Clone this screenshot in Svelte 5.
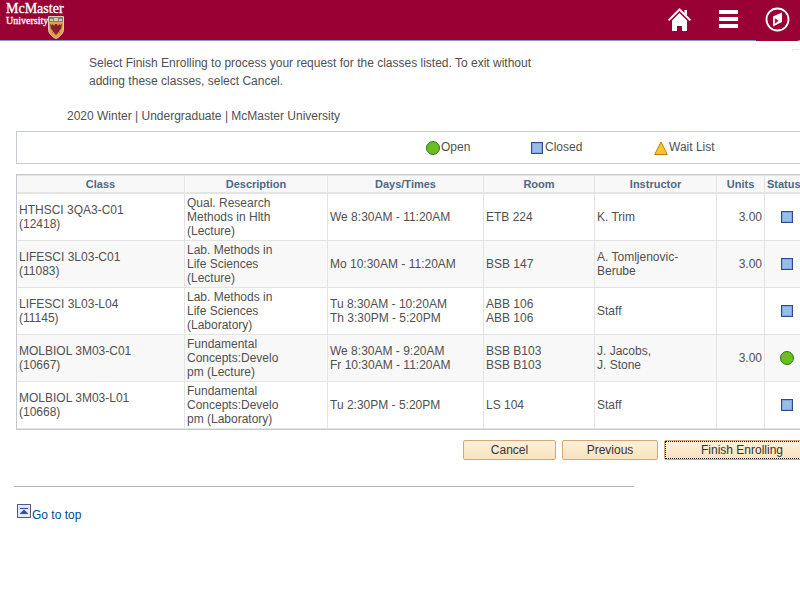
<script>
  const columns = [
    { label: 'Class', width: 168 },
    { label: 'Description', width: 143 },
    { label: 'Days/Times', width: 156 },
    { label: 'Room', width: 111 },
    { label: 'Instructor', width: 122 },
    { label: 'Units', width: 48 },
    { label: 'Status', width: 45 }
  ];

  const rows = [
    {
      name: ['HTHSCI 3QA3-C01', '(12418)'],
      description: ['Qual. Research', 'Methods in Hlth', '(Lecture)'],
      times: ['We 8:30AM - 11:20AM'],
      room: ['ETB 224'],
      instructor: ['K. Trim'],
      units: '3.00',
      status: 'closed'
    },
    {
      name: ['LIFESCI 3L03-C01', '(11083)'],
      description: ['Lab. Methods in', 'Life Sciences', '(Lecture)'],
      times: ['Mo 10:30AM - 11:20AM'],
      room: ['BSB 147'],
      instructor: ['A. Tomljenovic-', 'Berube'],
      units: '3.00',
      status: 'closed'
    },
    {
      name: ['LIFESCI 3L03-L04', '(11145)'],
      description: ['Lab. Methods in', 'Life Sciences', '(Laboratory)'],
      times: ['Tu 8:30AM - 10:20AM', 'Th 3:30PM - 5:20PM'],
      room: ['ABB 106', 'ABB 106'],
      instructor: ['Staff'],
      units: '',
      status: 'closed'
    },
    {
      name: ['MOLBIOL 3M03-C01', '(10667)'],
      description: ['Fundamental', 'Concepts:Develo', 'pm (Lecture)'],
      times: ['We 8:30AM - 9:20AM', 'Fr 10:30AM - 11:20AM'],
      room: ['BSB B103', 'BSB B103'],
      instructor: ['J. Jacobs,', 'J. Stone'],
      units: '3.00',
      status: 'open'
    },
    {
      name: ['MOLBIOL 3M03-L01', '(10668)'],
      description: ['Fundamental', 'Concepts:Develo', 'pm (Laboratory)'],
      times: ['Tu 2:30PM - 5:20PM'],
      room: ['LS 104'],
      instructor: ['Staff'],
      units: '',
      status: 'closed'
    }
  ];
</script>

{#snippet statusIcon(kind)}
  <svg class="status" width="14" height="14" viewBox="0 0 14 14" aria-hidden="true">
    {#if kind === 'open'}
      <circle cx="7" cy="7" r="6.5" fill="#6cbd1d" stroke="#188312" />
    {:else if kind === 'closed'}
      <rect x="1.5" y="1.5" width="11" height="11" fill="#97beeb" stroke="#2e4a8e" />
      <rect x="2.5" y="2.5" width="9" height="9" fill="none" stroke="#81a9df" />
    {:else}
      <path d="M7 .9 13.3 13.5H.7Z" fill="#fdc62f" stroke="#c0790a" />
    {/if}
  </svg>
{/snippet}

{#snippet lines(list)}
  {#each list as line}<div>{line}</div>{/each}
{/snippet}

<div class="page" id="top">
  <header>
    <a class="brand" href="#top">
      <span class="brand-name">McMaster</span>
      <span class="brand-row">
        <span class="brand-sub">University</span>
        <svg width="16" height="23" viewBox="0 0 16 23" aria-hidden="true">
          <path d="M.5 .5h15V13c0 4-3 7.500-7.500 9.500C3.500 20.500.5 17 .5 13Z" fill="#dfa348" stroke="#d9cfbe" />
          <path d="M1 1h14v5H1Z" fill="#85787c" />
          <path d="M2 3h3v2H2Zm4-1h4v3H6Zm5 1h3v2h-3Z" fill="#d8c8a0" />
          <path d="M2 8l2 1 1-1 1 2 1-2h2l1 2 1-2 1 1 2-1-1 5-2 2 1 2-2-1-1 3-1-1-1 1-1-3-2 1 1-2-2-2Z" fill="#86202b" />
        </svg>
      </span>
    </a>
    <nav>
      <a href="#home" aria-label="Home">
        <svg width="26" height="26" viewBox="0 0 26 26">
          <path d="M2.600 14.400 13.500 3.500 24.400 14.400" fill="none" stroke="#fff" stroke-width="2" />
          <path d="M18.500 4H21v6l-2.500-2.500Z" fill="#fff" />
          <path d="m13.500 7 7.500 7.500V25h-5v-5h-5v5H6V14.500Z" fill="#fff" />
        </svg>
      </a>
      <a href="#menu" aria-label="Menu">
        <svg width="26" height="26" viewBox="0 0 26 26">
          <path d="M4 4h19v4H4Zm0 7h19v4H4Zm0 7h19v4H4Z" fill="#fff" />
        </svg>
      </a>
      <a class="compass" href="#navbar" aria-label="NavBar">
        <svg width="26" height="26" viewBox="0 0 26 26">
          <circle cx="13.500" cy="13.500" r="11" fill="none" stroke="#fff" stroke-width="1.800" />
          <path d="M18 6.500v9.500l-9 4.500V10.500Z" fill="#fff" />
          <path d="m11.200 12.800 3 1.900-3 2.600Z" fill="#990033" stroke="#990033" stroke-width=".5" />
        </svg>
      </a>
    </nav>
  </header>

  <main>
    <span class="corner"></span>
    <p class="intro">
      Select Finish Enrolling to process your request for the classes listed. To exit without adding
      these classes, select Cancel.
    </p>
    <p class="term">2020 Winter | Undergraduate | McMaster University</p>

    <div class="legend">
      <span class="key">{@render statusIcon('open')}<span>Open</span></span>
      <span class="key">{@render statusIcon('closed')}<span>Closed</span></span>
      <span class="key">{@render statusIcon('wait')}<span>Wait List</span></span>
    </div>

    <table>
      <colgroup>
        {#each columns as column}<col style="width: {column.width}px" />{/each}
      </colgroup>
      <thead>
        <tr>
          {#each columns as column}<th scope="col">{column.label}</th>{/each}
        </tr>
      </thead>
      <tbody>
        {#each rows as row}
          <tr>
            <td>{@render lines(row.name)}</td>
            <td>{@render lines(row.description)}</td>
            <td>{@render lines(row.times)}</td>
            <td>{@render lines(row.room)}</td>
            <td>{@render lines(row.instructor)}</td>
            <td class="units">{row.units}</td>
            <td class="state" aria-label={row.status}>{@render statusIcon(row.status)}</td>
          </tr>
        {/each}
      </tbody>
    </table>

    <div class="actions">
      <button class="cancel" type="button">Cancel</button>
      <button class="previous" type="button">Previous</button>
      <button class="finish" type="button">Finish Enrolling</button>
    </div>

    <hr />

    <a class="to-top" href="#top">
      <svg width="14" height="14" viewBox="0 0 14 14" aria-hidden="true">
        <rect x=".5" y=".5" width="13" height="13" fill="#dfe9fb" stroke="#525e80" />
        <path d="M3 4h8v1H3Z" fill="#3d4f8c" />
        <path d="M7 5.500 11 9.500V10H3v-.5Z" fill="#3d4f8c" />
      </svg>
      <span>Go to top</span>
    </a>
  </main>
</div>

<style>
  :global(body) {
    margin: 0;
    background: #fff;
  }

  .page {
    overflow-x: hidden;
    font: 12px/14px 'Liberation Sans', Arial, sans-serif;
    color: #505050;
  }

  header {
    display: flex;
    justify-content: space-between;
    height: 40px;
    background: #990033;
    border-bottom: 1px solid #7a9cc6;
  }

  .brand {
    display: flex;
    flex-direction: column;
    padding-left: 6px;
    color: #fff;
    text-decoration: none;
    font-family: 'Liberation Serif', 'Times New Roman', serif;
    -webkit-text-stroke: 0.3px #fff;
  }

  .brand-name {
    font-size: 14px;
    line-height: 16px;
    padding-top: 1px;
    margin-bottom: -1px;
  }

  .brand-row {
    display: flex;
    gap: 2px;
  }

  .brand-sub {
    width: 40px;
    font-size: 10px;
    line-height: 10px;
  }

  nav {
    display: flex;
    align-items: flex-start;
    gap: 7px;
    padding-right: 2px;
  }

  nav a {
    display: flex;
    justify-content: center;
    width: 42px;
    height: 34px;
    padding-top: 6px;
  }

  .compass {
    height: 35px;
    background: #990033;
  }

  main {
    position: relative;
    padding-left: 16px;
  }

  .corner {
    position: absolute;
    top: 8px;
    right: 1px;
    width: 6px;
    height: 1px;
    border-top: 1px solid #e6e6e6;
    border-left: 1px solid #e6e6e6;
  }

  p {
    margin: 0;
  }

  .intro {
    max-width: 460px;
    padding: 13px 0 0 73px;
    line-height: 18px;
  }

  .term {
    padding: 19px 0 8px 51px;
  }

  .legend,
  table {
    box-sizing: border-box;
    width: 100%;
    min-width: 795px;
  }

  .legend {
    display: flex;
    align-items: center;
    height: 33px;
    padding-left: 409px;
    border: 1px solid #c6cad2;
  }

  .key {
    display: flex;
    width: 104px;
    margin-top: -1px;
  }

  .key:nth-child(2) {
    width: 124px;
  }

  .key .status {
    margin-top: 1px;
    margin-bottom: -1px;
  }

  .key span {
    margin-left: 1px;
  }

  .status {
    display: block;
    flex: none;
  }

  table {
    margin-top: 10px;
    table-layout: fixed;
    border-collapse: separate;
    border-spacing: 0;
    border: 1px solid #c6c8d0;
  }

  th,
  td {
    border-right: 1px solid #e4e4e4;
    border-bottom: 1px solid #e4e4e4;
    text-align: left;
  }

  th {
    padding: 1px 0 0;
    border-top: 1px solid #e4e4e4;
    border-bottom-width: 2px;
    background: #f8f8f8;
    color: #4c6888;
    font-size: 11px;
    line-height: 15px;
    text-align: center;
  }

  th:last-child {
    padding-left: 2px;
    text-align: left;
  }

  td {
    padding: 2px;
  }

  tbody tr:nth-child(even) {
    background: #f8f8f8;
  }

  .units {
    text-align: right;
  }

  .state .status {
    margin: 0 auto;
  }

  .actions {
    display: flex;
    gap: 6px;
    padding: 10px 0 0 447px;
  }

  button {
    flex: none;
    height: 20px;
    padding: 0;
    border: 1px solid #d7a772;
    border-radius: 2px;
    background: linear-gradient(#fdf0dc, #fae3bb);
    color: #333;
    font: inherit;
  }

  .cancel {
    width: 93px;
  }

  .previous {
    width: 96px;
  }

  .finish {
    width: 156px;
    outline: 1px dotted #000;
    outline-offset: -2px;
  }

  hr {
    width: 620px;
    margin: 26px 0 17px -2px;
    border: 0;
    border-top: 1px solid #b4b4b4;
  }

  .to-top {
    display: inline-flex;
    gap: 1px;
    margin-left: 1px;
    color: #004b91;
    text-decoration: none;
  }

  .to-top span {
    padding-top: 4px;
  }
</style>
